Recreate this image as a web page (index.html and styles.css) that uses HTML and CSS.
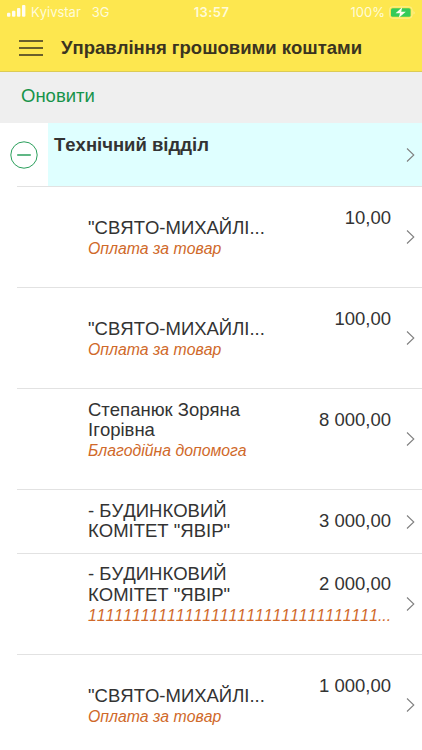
FILE: index.html
```
<!DOCTYPE html>
<html lang="uk">
<head>
  <meta charset="utf-8">
  <title>Управління грошовими коштами</title>
  <link rel="stylesheet" href="styles.css">
</head>
<body>
  <svg width="0" height="0" class="defs">
    <symbol id="chevron" viewBox="0 0 9 14">
      <path d="M1 .5 L7.8 7 L1 13.5" fill="none" stroke="#808080" stroke-width="1.1"/>
    </symbol>
  </svg>

  <header class="top">
    <div class="status">
      <div class="carrier">
        <svg width="19" height="12" viewBox="0 0 19 12" fill="#fffdf0">
          <rect x="0" y="7.8" width="3.4" height="4" rx="1"/>
          <rect x="5" y="5.8" width="3.4" height="6" rx="1"/>
          <rect x="10" y="3" width="3.4" height="8.8" rx="1"/>
          <rect x="15" y="0" width="3.4" height="11.8" rx="1"/>
        </svg>
        <span class="name-op">Kyivstar</span>
        <span>3G</span>
      </div>
      <div class="clock">13:57</div>
      <div class="battery">
        <span>100%</span>
        <svg width="27" height="13" viewBox="0 0 27 13">
          <rect x=".5" y=".8" width="22.6" height="11.4" rx="3" fill="none" stroke="#fdf08f"/>
          <rect x="2" y="2.2" width="19.6" height="8.6" rx="1.6" fill="#35cb58"/>
          <path d="M24.6 4.5 Q26.4 6.5 24.6 8.5 Z" fill="#fdf3a6"/>
          <path d="M13.2 1.2 L6.6 7.2 H11 L9.8 11.8 L16.8 5.8 H12.2 Z" fill="#fffdf0"/>
        </svg>
      </div>
    </div>
    <div class="bar">
      <svg width="24" height="16" viewBox="0 0 24 16" stroke="#3a3420" stroke-width="1.6">
        <path d="M0 1 H24 M0 8 H24 M0 15 H24"/>
      </svg>
      <h1>Управління грошовими коштами</h1>
    </div>
  </header>

  <div class="toolbar"><a class="refresh">Оновити</a></div>

  <div class="group">
    <div class="toggle">
      <svg width="28" height="28" viewBox="0 0 28 28" fill="none" stroke="#2b9f5c">
        <circle cx="14" cy="14" r="13.2" stroke-width="1"/>
        <path d="M7.2 14 H20.8" stroke-width="1.5"/>
      </svg>
    </div>
    <div class="group-title">
      <h2>Технічний відділ</h2>
      <svg class="chevron"><use href="#chevron"/></svg>
    </div>
  </div>

  <div class="list">
    <div class="row">
      <div class="info">
        <div class="main"><span class="name">"СВЯТО-МИХАЙЛІ...</span><span class="sum">10,00</span></div>
        <div class="note">Оплата за товар</div>
      </div>
      <svg class="chevron"><use href="#chevron"/></svg>
    </div>
    <div class="row">
      <div class="info">
        <div class="main"><span class="name">"СВЯТО-МИХАЙЛІ...</span><span class="sum">100,00</span></div>
        <div class="note">Оплата за товар</div>
      </div>
      <svg class="chevron"><use href="#chevron"/></svg>
    </div>
    <div class="row">
      <div class="info">
        <div class="main"><span class="name">Степанюк Зоряна Ігорівна</span><span class="sum">8 000,00</span></div>
        <div class="note">Благодійна допомога</div>
      </div>
      <svg class="chevron"><use href="#chevron"/></svg>
    </div>
    <div class="row short">
      <div class="info">
        <div class="main"><span class="name">- БУДИНКОВИЙ КОМІТЕТ "ЯВІР"</span><span class="sum">3 000,00</span></div>
      </div>
      <svg class="chevron"><use href="#chevron"/></svg>
    </div>
    <div class="row">
      <div class="info">
        <div class="main"><span class="name">- БУДИНКОВИЙ КОМІТЕТ "ЯВІР"</span><span class="sum">2 000,00</span></div>
        <div class="note">111111111111111111111111111111111...</div>
      </div>
      <svg class="chevron"><use href="#chevron"/></svg>
    </div>
    <div class="row">
      <div class="info">
        <div class="main"><span class="name">"СВЯТО-МИХАЙЛІ...</span><span class="sum">1 000,00</span></div>
        <div class="note">Оплата за товар</div>
      </div>
      <svg class="chevron"><use href="#chevron"/></svg>
    </div>
  </div>
</body>
</html>
```
FILE: styles.css
```
* {
  box-sizing: border-box;
}

body {
  margin: 0;
  height: 750px;
  overflow: hidden;
  background: #fff;
  color: #333;
  font-family: "Liberation Sans", Arial, sans-serif;
  font-size: 18.5px;
  font-kerning: none;
}

h1, h2 {
  margin: 0;
  font-weight: bold;
}

svg {
  display: block;
  flex: none;
}

.defs {
  position: absolute;
}

.top {
  height: 72px;
  background: #fde74f;
  border-bottom: 1px solid #dccb55;
}

.status {
  display: grid;
  grid-template-columns: 1fr auto 1fr;
  align-items: center;
  height: 24px;
  padding: 0 6px 0 7px;
  color: #fffbd8;
  font-family: Inter, sans-serif;
  font-size: 13px;
}

.carrier, .battery {
  display: flex;
  align-items: center;
}

.carrier svg {
  margin-top: -2px;
}

.name-op {
  margin: 0 11px 0 5px;
}

.clock {
  font-weight: 600;
  letter-spacing: 0.4px;
}

.battery {
  justify-content: flex-end;
  gap: 4px;
}

.bar {
  display: flex;
  align-items: center;
  gap: 18px;
  height: 47px;
  padding-left: 19px;
}

.bar h1 {
  color: #3a3420;
  font-size: 18.5px;
}

.toolbar {
  height: 51px;
  padding: 13px 21px;
  background: #efefef;
}

.refresh {
  color: #16934a;
  line-height: 22px;
}

.group {
  display: flex;
  height: 63px;
}

.toggle {
  display: flex;
  align-items: center;
  width: 48px;
  padding-left: 10px;
}

.group-title {
  display: flex;
  flex: 1;
  align-items: center;
  justify-content: space-between;
  padding: 0 7px 0 6px;
  background: #dfffff;
}

.group-title h2 {
  align-self: flex-start;
  padding-top: 11px;
  font-size: 18.5px;
  line-height: 21px;
}

.chevron {
  width: 9px;
  height: 14px;
}

.row {
  display: flex;
  align-items: center;
  justify-content: space-between;
  height: 101.1px;
  margin-left: 17px;
  padding: 0 7px 0 71px;
  border-top: 1px solid #e2e2e2;
}

.short {
  height: 63.6px;
}

.info {
  align-self: flex-start;
  width: 303px;
  padding-top: 10px;
}

.main {
  display: flex;
  align-items: center;
  justify-content: space-between;
  height: 42px;
  line-height: 20.8px;
}

.name {
  align-self: flex-end;
  width: 185px;
}

.sum {
  white-space: nowrap;
}

.note {
  color: #d0692a;
  font-size: 15.8px;
  font-style: italic;
  line-height: 20px;
  white-space: nowrap;
}
```
